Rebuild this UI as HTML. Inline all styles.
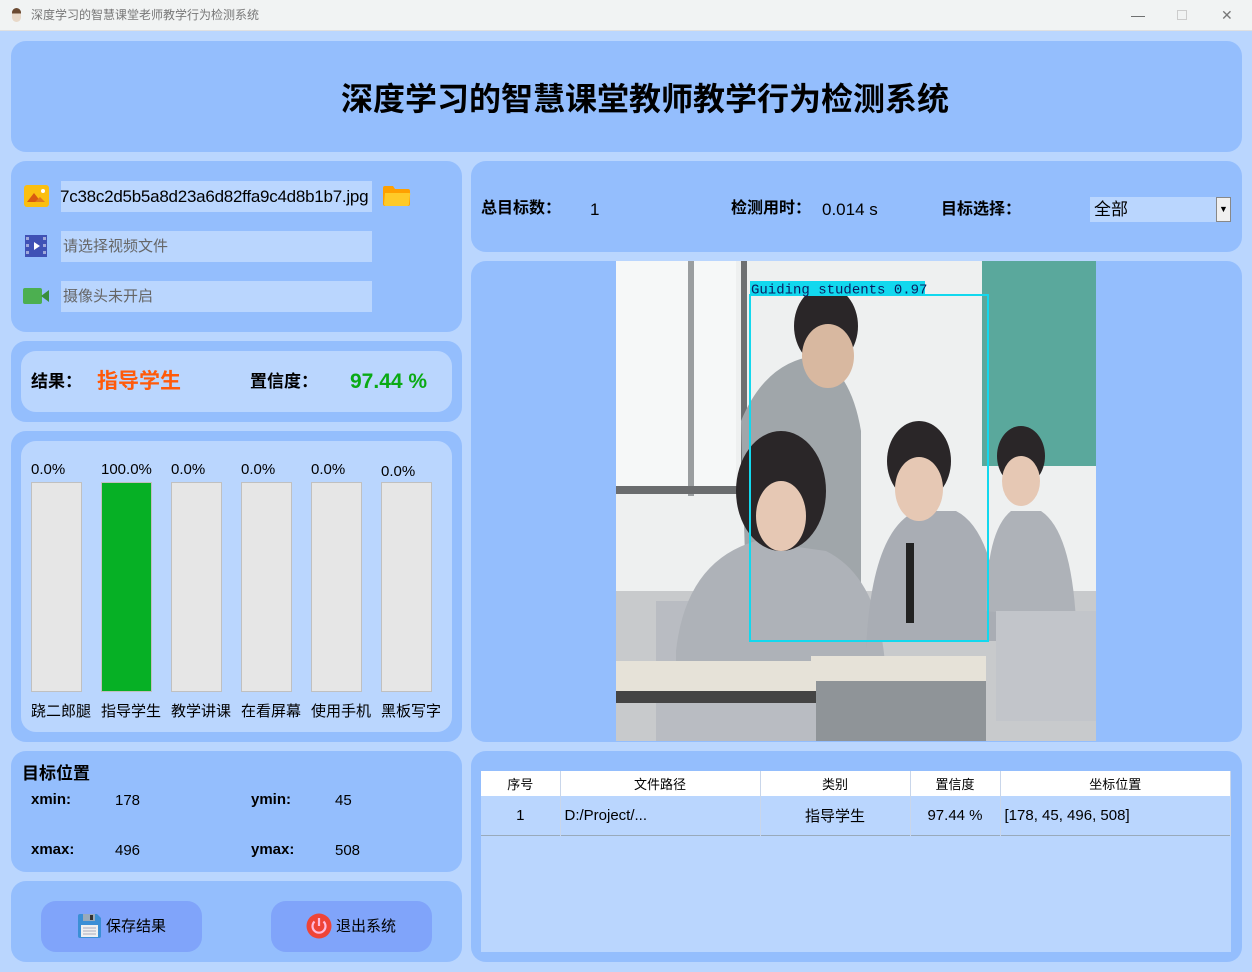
<!DOCTYPE html>
<html><head><meta charset="utf-8"><style>
*{margin:0;padding:0;box-sizing:border-box}
body{width:1252px;height:972px;background:#bad6fe;position:relative;overflow:hidden;font-family:"Liberation Sans","Noto Sans CJK SC",sans-serif;color:#000}
.a{position:absolute}
.p{position:absolute;background:#94befd;border-radius:15px}
.in{position:absolute;background:#bad6fe}
.t{position:absolute;white-space:nowrap;line-height:1}
.bar{position:absolute;top:482px;width:51px;height:210px;background:#e6e6e6;border:1px solid #c0c0c0}
.btn{position:absolute;background:#80a4fa;border-radius:15px;width:161px;height:51px;top:901px}
th,td{font-weight:normal;border-right:1px solid #c9d6ea;vertical-align:middle}
</style></head><body>
<div class="a" style="left:0;top:0;width:1252px;height:31px;background:#f1f3f3;border-bottom:1px solid #e0e0e0"></div>
<div class="a" style="left:12px;top:8px;width:9px;height:14px;border-radius:5px;background:linear-gradient(#6b4a32 40%,#e8d8c8 40%)"></div>
<div class="t" style="left:31px;top:9px;font-size:12px;color:#777">深度学习的智慧课堂老师教学行为检测系统</div>
<div class="t" style="left:1131px;top:8px;font-size:14px;color:#666">—</div>
<div class="a" style="left:1177px;top:10px;width:10px;height:10px;border:1px solid #ccc"></div>
<div class="t" style="left:1221px;top:8px;font-size:14px;color:#777">✕</div>

<div class="p" style="left:11px;top:41px;width:1231px;height:111px"></div>
<div class="t" style="left:0;width:1290px;text-align:center;top:83px;font-size:32px;font-weight:bold">深度学习的智慧课堂教师教学行为检测系统</div>

<div class="p" style="left:11px;top:161px;width:451px;height:171px"></div>
<div class="a" style="left:24px;top:185px;width:25px;height:22px;background:#fbbf10;border-radius:3px"></div>
<svg class="a" style="left:24px;top:185px" width="25" height="22"><path d="M3 17 L10 8 L17 17Z" fill="#d95a10"/><path d="M11 17 L16 12 L21 17Z" fill="#e07a20"/><circle cx="19" cy="6" r="2" fill="#fff"/></svg>
<div class="in" style="left:61px;top:181px;width:311px;height:31px"></div>
<div class="t" style="left:60px;top:188px;font-size:17px;letter-spacing:-0.25px">7c38c2d5b5a8d23a6d82ffa9c4d8b1b7.jpg</div>
<svg class="a" style="left:383px;top:186px" width="28" height="20"><path d="M0 2 Q0 0 2 0 H10 L12 3 H25 Q27 3 27 5 V18 Q27 20 25 20 H2 Q0 20 0 18Z" fill="#ffa000"/><path d="M2 7 H26 Q28 7 27 9 L26 18 Q26 20 24 20 H3 Q1 20 1 18Z" fill="#ffca28"/></svg>
<div class="a" style="left:25px;top:235px;width:22px;height:22px;background:#3f51b5"></div>
<svg class="a" style="left:25px;top:235px" width="22" height="22"><g fill="#9fa8da"><rect x="1" y="2" width="3" height="3"/><rect x="1" y="9" width="3" height="3"/><rect x="1" y="16" width="3" height="3"/><rect x="18" y="2" width="3" height="3"/><rect x="18" y="9" width="3" height="3"/><rect x="18" y="16" width="3" height="3"/></g><path d="M9 7 L15 11 L9 15Z" fill="#fff"/></svg>
<div class="in" style="left:61px;top:231px;width:311px;height:31px"></div>
<div class="t" style="left:63px;top:239px;font-size:15px;color:#666">请选择视频文件</div>
<svg class="a" style="left:23px;top:288px" width="27" height="16"><rect x="0" y="0" width="19" height="16" rx="2" fill="#4caf50"/><path d="M18 8 L26 2 V14Z" fill="#388e3c"/></svg>
<div class="in" style="left:61px;top:281px;width:311px;height:31px"></div>
<div class="t" style="left:63px;top:289px;font-size:15px;color:#666">摄像头未开启</div>

<div class="p" style="left:11px;top:341px;width:451px;height:81px"></div>
<div class="in" style="left:21px;top:351px;width:431px;height:61px;border-radius:15px"></div>
<div class="t" style="left:31px;top:373px;font-size:17px;font-weight:bold">结果：</div>
<div class="t" style="left:97px;top:371px;font-size:21px;font-weight:bold;color:#ff5a0a">指导学生</div>
<div class="t" style="left:250px;top:373px;font-size:17px;font-weight:bold">置信度：</div>
<div class="t" style="left:350px;top:371px;font-size:21px;font-weight:bold;color:#0aaa14">97.44 %</div>

<div class="p" style="left:11px;top:431px;width:451px;height:311px"></div>
<div class="in" style="left:21px;top:441px;width:431px;height:291px;border-radius:15px"></div>
<div class="t" style="left:31px;top:462px;font-size:15px">0.0%</div>
<div class="t" style="left:101px;top:462px;font-size:15px">100.0%</div>
<div class="t" style="left:171px;top:462px;font-size:15px">0.0%</div>
<div class="t" style="left:241px;top:462px;font-size:15px">0.0%</div>
<div class="t" style="left:311px;top:462px;font-size:15px">0.0%</div>
<div class="t" style="left:381px;top:464px;font-size:15px">0.0%</div>
<div class="bar" style="left:31px"></div>
<div class="bar" style="left:101px;background:#06b025"></div>
<div class="bar" style="left:171px"></div>
<div class="bar" style="left:241px"></div>
<div class="bar" style="left:311px"></div>
<div class="bar" style="left:381px"></div>
<div class="t" style="left:31px;top:704px;font-size:15px">跷二郎腿</div>
<div class="t" style="left:101px;top:704px;font-size:15px">指导学生</div>
<div class="t" style="left:171px;top:704px;font-size:15px">教学讲课</div>
<div class="t" style="left:241px;top:704px;font-size:15px">在看屏幕</div>
<div class="t" style="left:311px;top:704px;font-size:15px">使用手机</div>
<div class="t" style="left:381px;top:704px;font-size:15px">黑板写字</div>

<div class="p" style="left:11px;top:751px;width:451px;height:121px"></div>
<div class="t" style="left:22px;top:765px;font-size:17px;font-weight:bold">目标位置</div>
<div class="t" style="left:31px;top:792px;font-size:15px;font-weight:bold">xmin:</div>
<div class="t" style="left:115px;top:793px;font-size:15px">178</div>
<div class="t" style="left:251px;top:792px;font-size:15px;font-weight:bold">ymin:</div>
<div class="t" style="left:335px;top:793px;font-size:15px">45</div>
<div class="t" style="left:31px;top:842px;font-size:15px;font-weight:bold">xmax:</div>
<div class="t" style="left:115px;top:843px;font-size:15px">496</div>
<div class="t" style="left:251px;top:842px;font-size:15px;font-weight:bold">ymax:</div>
<div class="t" style="left:335px;top:843px;font-size:15px">508</div>

<div class="p" style="left:11px;top:881px;width:451px;height:81px"></div>
<div class="btn" style="left:41px"></div>
<svg class="a" style="left:78px;top:914px" width="23" height="24"><path d="M0 2 Q0 0 2 0 H19 L23 4 V22 Q23 24 21 24 H2 Q0 24 0 22Z" fill="#3b8fd6"/><rect x="5" y="0" width="12" height="7" fill="#9ab"/><rect x="12" y="1" width="3" height="5" fill="#333"/><rect x="3" y="11" width="17" height="12" fill="#f0f0f0"/><g stroke="#aab" stroke-width="1"><path d="M5 14H18M5 17H18M5 20H18"/></g></svg>
<div class="t" style="left:106px;top:919px;font-size:15px">保存结果</div>
<div class="btn" style="left:271px"></div>
<svg class="a" style="left:306px;top:913px" width="26" height="26"><circle cx="13" cy="13" r="12.5" fill="#ef4437"/><path d="M8.5 8.5 A6.5 6.5 0 1 0 17.5 8.5" stroke="#fbd" stroke-width="2.2" fill="none"/><path d="M13 5V13" stroke="#fbd" stroke-width="2.2"/></svg>
<div class="t" style="left:336px;top:919px;font-size:15px">退出系统</div>

<div class="p" style="left:471px;top:161px;width:771px;height:91px"></div>
<div class="t" style="left:481px;top:201px;font-size:16px;font-weight:bold">总目标数：</div>
<div class="t" style="left:590px;top:201px;font-size:17px">1</div>
<div class="t" style="left:731px;top:201px;font-size:16px;font-weight:bold">检测用时：</div>
<div class="t" style="left:822px;top:201px;font-size:17px">0.014 s</div>
<div class="t" style="left:941px;top:202px;font-size:16px;font-weight:bold">目标选择：</div>
<div class="in" style="left:1090px;top:197px;width:141px;height:25px"></div>
<div class="t" style="left:1094px;top:201px;font-size:17px">全部</div>
<div class="a" style="left:1216px;top:197px;width:15px;height:25px;background:#f0f0f0;border:1px solid #888;font-size:9px;text-align:center;line-height:22px">▼</div>

<div class="p" style="left:471px;top:261px;width:771px;height:481px"></div>
<svg class="a" style="left:616px;top:261px" width="480" height="480">
<rect width="480" height="480" fill="#eef0f0"/>
<rect x="0" y="0" width="120" height="230" fill="#f6f8f8"/>
<rect x="72" y="0" width="6" height="235" fill="#9a9ea0"/>
<rect x="125" y="0" width="6" height="235" fill="#6e7072"/>
<rect x="0" y="225" width="130" height="8" fill="#6a6c6e"/>
<rect x="366" y="0" width="114" height="205" fill="#5aa89c"/>
<rect x="0" y="330" width="480" height="150" fill="#c8cacc"/>
<path d="M40 340 H200 V480 H40Z" fill="#b9bcc2"/>
<path d="M125 160 Q150 100 200 95 Q235 110 245 170 L245 330 H130Z" fill="#a0a6aa"/>
<ellipse cx="210" cy="65" rx="32" ry="40" fill="#2a2628"/>
<ellipse cx="212" cy="95" rx="26" ry="32" fill="#d8b8a0"/>
<path d="M60 390 Q70 300 140 280 L210 290 Q270 320 270 430 H60Z" fill="#aeb2b8"/>
<ellipse cx="165" cy="230" rx="45" ry="60" fill="#2a2628"/>
<ellipse cx="165" cy="255" rx="25" ry="35" fill="#e6c8b4"/>
<path d="M250 390 Q255 270 300 250 L340 250 Q380 270 385 380 H250Z" fill="#a9adb4"/>
<ellipse cx="303" cy="200" rx="32" ry="40" fill="#2a2628"/>
<ellipse cx="303" cy="228" rx="24" ry="32" fill="#e6c8b4"/>
<rect x="290" y="282" width="8" height="80" fill="#222"/>
<path d="M370 350 Q370 270 395 250 L425 250 Q455 270 460 360Z" fill="#aeb2b8"/>
<ellipse cx="405" cy="195" rx="24" ry="30" fill="#2a2628"/>
<ellipse cx="405" cy="220" rx="19" ry="25" fill="#e6c8b4"/>
<path d="M0 400 H220 L215 430 H0Z" fill="#e6e2d8"/>
<rect x="0" y="430" width="220" height="12" fill="#444"/>
<path d="M195 395 H370 V420 H195Z" fill="#e6e2d8"/>
<rect x="200" y="420" width="170" height="60" fill="#8f9498"/>
<path d="M380 350 H480 V460 H380Z" fill="#c2c5ca"/>
<rect x="134" y="34" width="238" height="346" fill="none" stroke="#12d8ee" stroke-width="2"/>
<rect x="134" y="20" width="175" height="14" fill="#12d8ee"/>
<text x="135" y="32.5" font-family="Liberation Mono,monospace" font-size="14" fill="#0a1e60">Guiding students 0.97</text>
</svg>

<div class="p" style="left:471px;top:751px;width:771px;height:211px"></div>
<div class="in" style="left:481px;top:771px;width:750px;height:181px"></div>
<table class="a" style="left:481px;top:771px;width:750px;border-collapse:collapse;font-size:13px;text-align:center">
<tr style="background:#fff;height:25px"><th style="width:79px">序号</th><th style="width:200px">文件路径</th><th style="width:150px">类别</th><th style="width:90px">置信度</th><th>坐标位置</th></tr>
<tr style="height:39px;font-size:15px;border-bottom:1px solid #9ab"><td>1</td><td style="text-align:left;padding-left:4px">D:/Project/...</td><td>指导学生</td><td>97.44 %</td><td style="text-align:left;padding-left:4px">[178, 45, 496, 508]</td></tr>
</table>
</body></html>
